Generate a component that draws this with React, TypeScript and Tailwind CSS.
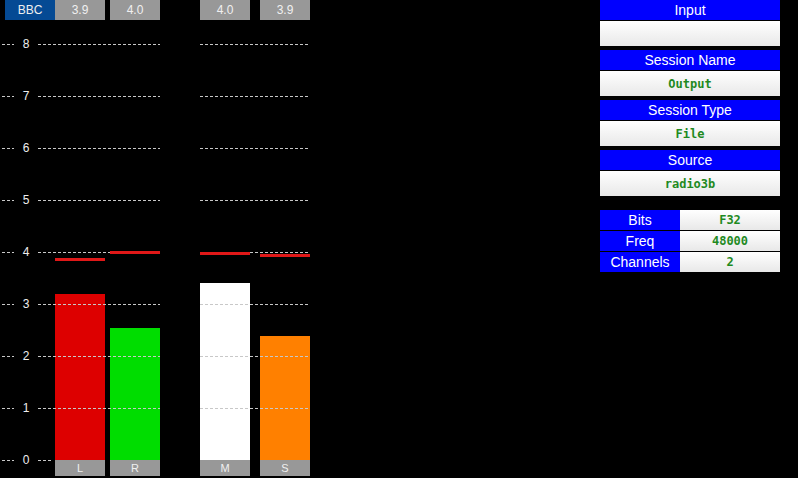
import React from 'react';

type Channel = {
  name: string;
  peakText: string;
  level: number;
  peak: number;
  color: string;
  gap: string;
};

const UNIT = 52;

const channels: Channel[] = [
  { name: 'L', peakText: '3.9', level: 3.2, peak: 3.885, color: 'bg-[#dd0000]', gap: 'ml-0' },
  { name: 'R', peakText: '4.0', level: 2.54, peak: 4.02, color: 'bg-[#00dd00]', gap: 'ml-[5px]' },
  { name: 'M', peakText: '4.0', level: 3.4, peak: 4.0, color: 'bg-white', gap: 'ml-[40px]' },
  { name: 'S', peakText: '3.9', level: 2.385, peak: 3.96, color: 'bg-[#ff8000]', gap: 'ml-[10px]' },
];

const dash = 'shrink-0 h-px bg-[repeating-linear-gradient(90deg,#c8c8c8_0_3px,transparent_3px_5px)]';

const GridLine: React.FC<{ value: number }> = ({ value }) => (
  <div
    className="absolute left-0 w-[310px] h-[14px] flex items-center"
    style={{ top: 24 + (8 - value) * UNIT - 7 }}
  >
    <div className={`ml-[2px] w-[12px] ${dash}`} />
    <div className="shrink-0 w-[24px] text-center text-[12px] leading-none text-[#eeeeee]">{value}</div>
    {value > 0 && (
      <>
        <div className={`w-[122px] ${dash}`} />
        <div className="shrink-0 w-[40px]" />
        <div className={`w-[110px] ${dash}`} />
      </>
    )}
    {value === 0 && <div className={`w-[15px] ${dash}`} />}
  </div>
);

const InfoBlock: React.FC<{ title: string; value: string }> = ({ title, value }) => (
  <div className="h-[50px]">
    <div className="h-5 bg-[#0000ff] text-white text-[14px] leading-5 text-center">{title}</div>
    <div className="mt-px h-[25px] bg-gradient-to-b from-white to-[#e8e8e8] text-center text-[12px] leading-[26px] font-bold text-[#1f8a1f] font-['DejaVu_Sans_Mono',monospace]">
      {value}
    </div>
  </div>
);

const TableRow: React.FC<{ label: string; value: string }> = ({ label, value }) => (
  <div className="flex h-5 mb-px">
    <div className="w-[80px] bg-[#0000ff] text-white text-[14px] leading-5 text-center">{label}</div>
    <div className="w-[100px] bg-gradient-to-b from-white to-[#e8e8e8] text-center text-[12px] leading-5 font-bold text-[#1f8a1f] font-['DejaVu_Sans_Mono',monospace]">
      {value}
    </div>
  </div>
);

export default function App() {
  return (
    <div className="w-[798px] h-[478px] bg-black flex font-['Liberation_Sans',Arial,sans-serif] overflow-hidden">
      {/* Meters */}
      <div className="w-[310px] shrink-0 flex flex-col">
        <div className="flex h-5">
          <div className="ml-[5px] w-[50px] bg-[#054a94] text-[#eeeeee] text-[12px] leading-5 text-center">BBC</div>
          {channels.map((c) => (
            <div
              key={c.name}
              className={`${c.gap} w-[50px] bg-[#989898] text-[#f0f0f0] text-[12px] leading-5 text-center`}
            >
              {c.peakText}
            </div>
          ))}
        </div>

        <div className="relative h-[440px] flex">
          <div className="w-[55px] shrink-0" />
          {channels.map((c) => (
            <div key={c.name} className={`${c.gap} relative shrink-0 w-[50px] h-full flex items-end`}>
              <div className={`w-full ${c.color}`} style={{ height: Math.round(c.level * UNIT) }} />
              {/* peak hold marker sits above the grid */}
              <div
                className="absolute z-10 left-0 w-full h-[3px] bg-[#e01818]"
                style={{ top: Math.round(440 - c.peak * UNIT) }}
              />
            </div>
          ))}
          <div className="absolute z-[5] inset-0 pointer-events-none">
            {[8, 7, 6, 5, 4, 3, 2, 1, 0].map((v) => (
              <GridLine key={v} value={v} />
            ))}
          </div>
        </div>

        <div className="flex h-4 relative">
          <div className="w-[55px] shrink-0" />
          {channels.map((c) => (
            <div
              key={c.name}
              className={`${c.gap} shrink-0 w-[50px] bg-[#989898] text-[#f0f0f0] text-[11px] leading-4 text-center`}
            >
              {c.name}
            </div>
          ))}
        </div>
      </div>

      {/* Session info */}
      <div className="ml-[290px] w-[180px] shrink-0">
        <InfoBlock title="Input" value="" />
        <InfoBlock title="Session Name" value="Output" />
        <InfoBlock title="Session Type" value="File" />
        <InfoBlock title="Source" value="radio3b" />
        <div className="mt-[10px]">
          <TableRow label="Bits" value="F32" />
          <TableRow label="Freq" value="48000" />
          <TableRow label="Channels" value="2" />
        </div>
      </div>
    </div>
  );
}
